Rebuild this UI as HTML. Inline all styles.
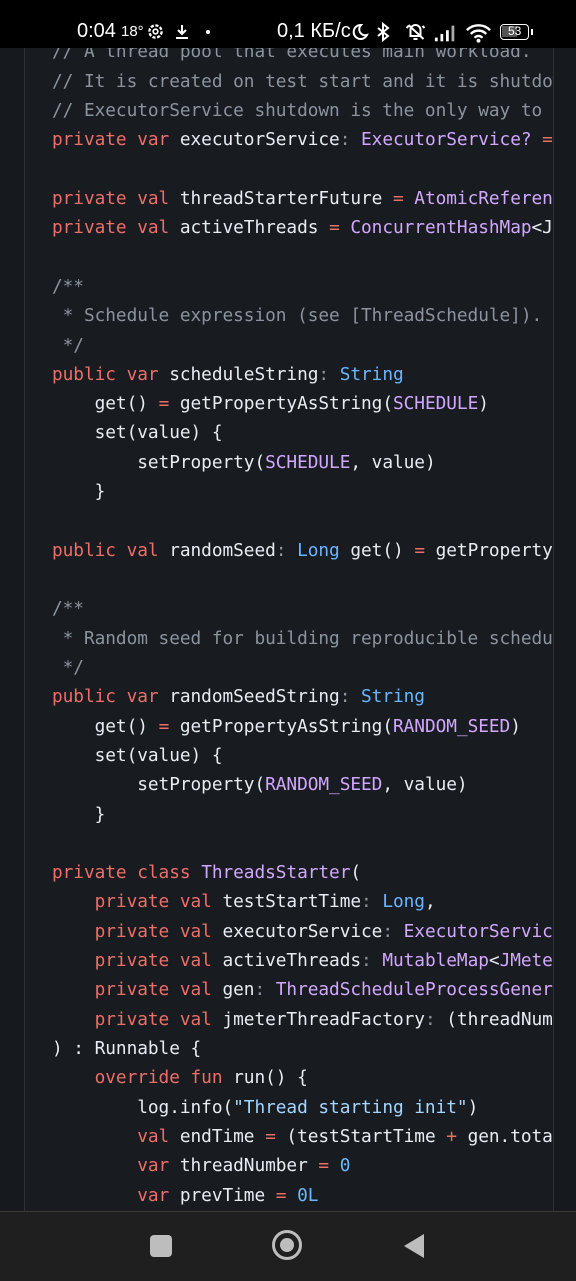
<!DOCTYPE html>
<html><head><meta charset="utf-8"><style>
html,body{margin:0;padding:0;width:576px;height:1280px;overflow:hidden;background:#16191e;}
#code{position:absolute;left:24px;top:0;width:528px;height:1211px;background:#181b20;border-left:1px solid #2c3037;border-right:1px solid #2c3037;overflow:hidden;}
pre{position:absolute;left:27px;top:37.4px;margin:0;font-family:"DejaVu Sans Mono","Liberation Mono",monospace;font-size:17.8px;line-height:29.31px;color:#e6edf3;white-space:pre;letter-spacing:-0.05px;}
.k{color:#ee6e68}.c{color:#8b949e}.t{color:#d2a8ff}.n{color:#6cb6ff}.s{color:#a5d6ff}.o{color:#ee6e68}
#sb{position:absolute;left:0;top:0;width:576px;height:48px;background:#000;color:#fff;font-family:"Liberation Sans",sans-serif;}
#nav{position:absolute;left:0;top:1211px;width:576px;height:69px;background:#1f1f1f;border-top:1px solid #3a3a3a;}
</style></head><body>
<div id="code"><pre><span class="c">// A thread pool that executes main workload.</span>
<span class="c">// It is created on test start and it is shutdown</span>
<span class="c">// ExecutorService shutdown is the only way to</span>
<span class="k">private var</span> executorService<span class="c">:</span> <span class="t">ExecutorService?</span> <span class="o">=</span>

<span class="k">private val</span> threadStarterFuture <span class="o">=</span> <span class="t">AtomicReference</span>
<span class="k">private val</span> activeThreads <span class="o">=</span> <span class="t">ConcurrentHashMap</span>&lt;J

<span class="c">/**</span>
<span class="c"> * Schedule expression (see [ThreadSchedule]).</span>
<span class="c"> */</span>
<span class="k">public var</span> scheduleString<span class="c">:</span> <span class="n">String</span>
    get() <span class="o">=</span> getPropertyAsString(<span class="t">SCHEDULE</span>)
    set(value) {
        setProperty(<span class="t">SCHEDULE</span>, value)
    }

<span class="k">public val</span> randomSeed<span class="c">:</span> <span class="n">Long</span> get() <span class="o">=</span> getProperty

<span class="c">/**</span>
<span class="c"> * Random seed for building reproducible schedule</span>
<span class="c"> */</span>
<span class="k">public var</span> randomSeedString<span class="c">:</span> <span class="n">String</span>
    get() <span class="o">=</span> getPropertyAsString(<span class="t">RANDOM_SEED</span>)
    set(value) {
        setProperty(<span class="t">RANDOM_SEED</span>, value)
    }

<span class="k">private class</span> <span class="t">ThreadsStarter</span>(
    <span class="k">private val</span> testStartTime<span class="c">:</span> <span class="n">Long</span>,
    <span class="k">private val</span> executorService<span class="c">:</span> <span class="t">ExecutorService</span>
    <span class="k">private val</span> activeThreads<span class="c">:</span> <span class="t">MutableMap</span>&lt;<span class="t">JMeter</span>
    <span class="k">private val</span> gen<span class="c">:</span> <span class="t">ThreadScheduleProcessGenerator</span>
    <span class="k">private val</span> jmeterThreadFactory<span class="c">:</span> (threadNumber
) : Runnable {
    <span class="k">override fun</span> run() {
        log.info(<span class="s">"Thread starting init"</span>)
        <span class="k">val</span> endTime <span class="o">=</span> (testStartTime <span class="o">+</span> gen.total
        <span class="k">var</span> threadNumber <span class="o">=</span> <span class="n">0</span>
        <span class="k">var</span> prevTime <span class="o">=</span> <span class="n">0L</span>
</pre></div>
<div id="sb">
<span style="position:absolute;left:77px;top:20px;font-size:20px;">0:04</span>
<span style="position:absolute;left:121px;top:23px;font-size:15px;">18°</span>
<svg style="position:absolute;left:146px;top:22px" width="19" height="19" viewBox="0 0 18 18"><circle cx="9" cy="9" r="5.8" fill="none" stroke="#fff" stroke-width="2.2" stroke-dasharray="3 1.5"/><circle cx="9" cy="9" r="2.2" fill="none" stroke="#fff" stroke-width="1.6"/></svg>
<svg style="position:absolute;left:174px;top:23px" width="16" height="18" viewBox="0 0 16 18"><path d="M8 2v9M4 7l4 4 4-4M2 15h12" stroke="#fff" stroke-width="2" fill="none"/></svg>
<span style="position:absolute;left:206px;top:30px;width:4px;height:4px;border-radius:2px;background:#fff"></span>
<span style="position:absolute;left:277px;top:20px;font-size:20px;">0,1 КБ/с</span>
<svg style="position:absolute;left:351px;top:23px" width="18" height="18" viewBox="0 0 18 18"><path d="M10 2a7 7 0 1 0 6 10A6 6 0 0 1 10 2z" stroke="#fff" stroke-width="2" fill="none"/></svg>
<svg style="position:absolute;left:376px;top:22px" width="14" height="20" viewBox="0 0 14 20"><path d="M2 6l10 8-5 4V2l5 4-10 8" stroke="#fff" stroke-width="2" fill="none"/></svg>
<svg style="position:absolute;left:405px;top:22px" width="21" height="20" viewBox="0 0 20 20"><path d="M5 14V8a5 5 0 0 1 10 0v6H5zM8 17h4M3 3l15 14M1 6l2-2M17 4l2 2" stroke="#fff" stroke-width="2" fill="none"/></svg>
<svg style="position:absolute;left:434px;top:24px" width="24" height="18" viewBox="0 0 26 18"><rect x="1" y="14" width="3" height="4" fill="#fff"/><rect x="7" y="10" width="3" height="8" fill="#fff"/><rect x="13" y="6" width="3" height="12" fill="#fff"/><rect x="19" y="1" width="3" height="17" fill="#aaa"/></svg>
<svg style="position:absolute;left:465px;top:22px" width="27" height="22" viewBox="0 0 28 22"><path d="M2 8a17 17 0 0 1 24 0M6 12a11 11 0 0 1 16 0M10 16a5 5 0 0 1 8 0" stroke="#fff" stroke-width="2.5" fill="none"/><circle cx="14" cy="19" r="2" fill="#fff"/></svg>
<div style="position:absolute;left:500px;top:24px;width:29px;height:16px;border:1.5px solid #fff;border-radius:4px;box-sizing:border-box;"><div style="position:absolute;left:1px;top:1px;width:15px;height:11px;background:#555"></div><span style="position:absolute;left:7px;top:-1px;font-size:12px;">53</span></div>
<span style="position:absolute;left:531px;top:29px;width:2px;height:6px;background:#fff"></span>
</div>
<div id="nav">
<div style="position:absolute;left:150px;top:23px;width:22px;height:22px;border-radius:4px;background:#bdbdbd"></div>
<div style="position:absolute;left:272px;top:18px;width:24px;height:24px;border:3px solid #bdbdbd;border-radius:50%"><div style="position:absolute;left:5px;top:5px;width:14px;height:14px;border-radius:50%;background:#bdbdbd"></div></div>
<svg style="position:absolute;left:402px;top:21px" width="24" height="26" viewBox="0 0 24 26"><path d="M22 1L2 13l20 12z" fill="#bdbdbd"/></svg>
</div>
</body></html>
